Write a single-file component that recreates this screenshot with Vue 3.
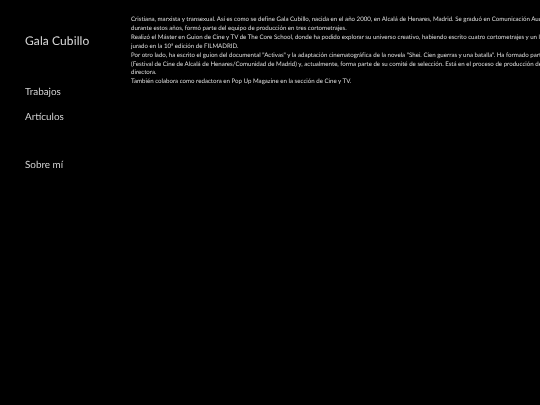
<script setup>
const lines = [
  "Cristiana, marxista y transexual. Así es como se define Gala Cubillo, nacida en el año 2000, en Alcalá de Henares, Madrid. Se graduó en Comunicación Audiovisual",
  "durante estos años, formó parte del equipo de producción en tres cortometrajes.",
  "Realizó el Máster en Guion de Cine y TV de The Core School, donde ha podido explorar su universo creativo, habiendo escrito cuatro cortometrajes y un largometraje",
  "jurado en la 10ª edición de FILMADRID.",
  "Por otro lado, ha escrito el guion del documental \"Activas\" y la adaptación cinematográfica de la novela \"Shei. Cien guerras y una batalla\". Ha formado parte",
  "(Festival de Cine de Alcalá de Henares/Comunidad de Madrid) y, actualmente, forma parte de su comité de selección. Está en el proceso de producción de",
  "directora.",
  "También colabora como redactora en Pop Up Magazine en la sección de Cine y TV.",
];
</script>

<template>
  <div class="page">
    <aside class="side">
      <h1 class="name">Gala Cubillo</h1>
      <nav class="nav">
        <a class="link">Trabajos</a>
        <a class="link">Artículos</a>
        <a class="link about">Sobre mí</a>
      </nav>
    </aside>
    <main class="bio">
      <p v-for="(line, i) in lines" :key="i" class="line">{{ line }}</p>
    </main>
  </div>
</template>

<style>
html,
body {
  margin: 0;
  background: #000;
}
</style>

<style scoped>
.page {
  display: flex;
  width: 540px;
  height: 405px;
  overflow: hidden;
  background: #000;
  color: #fff;
  font-family: "Lato", "Liberation Sans", sans-serif;
  text-rendering: geometricPrecision;
}

.side {
  flex: 0 0 131px;
  box-sizing: border-box;
  padding: 33px 0 0 25px;
  will-change: transform;
}

.name {
  margin: 0;
  font-size: 12px;
  line-height: 15px;
  font-weight: 400;
  letter-spacing: 0.1px;
  color: #d8d8d8;
}

.nav {
  display: flex;
  flex-direction: column;
  margin-top: 38px;
}

.link {
  font-size: 9.9px;
  line-height: 13px;
  margin-bottom: 12px;
  font-weight: 400;
  color: #d0d0d0;
}

.about {
  margin-top: 23px;
}

.bio {
  flex: 1;
  min-width: 0;
  padding-top: 16.4px;
  will-change: transform;
}

.line {
  margin: 0;
  height: 8.85px;
  font-size: 6.15px;
  line-height: 8.85px;
  letter-spacing: -0.005px;
  white-space: nowrap;
  color: #dcdcdc;
}
</style>
